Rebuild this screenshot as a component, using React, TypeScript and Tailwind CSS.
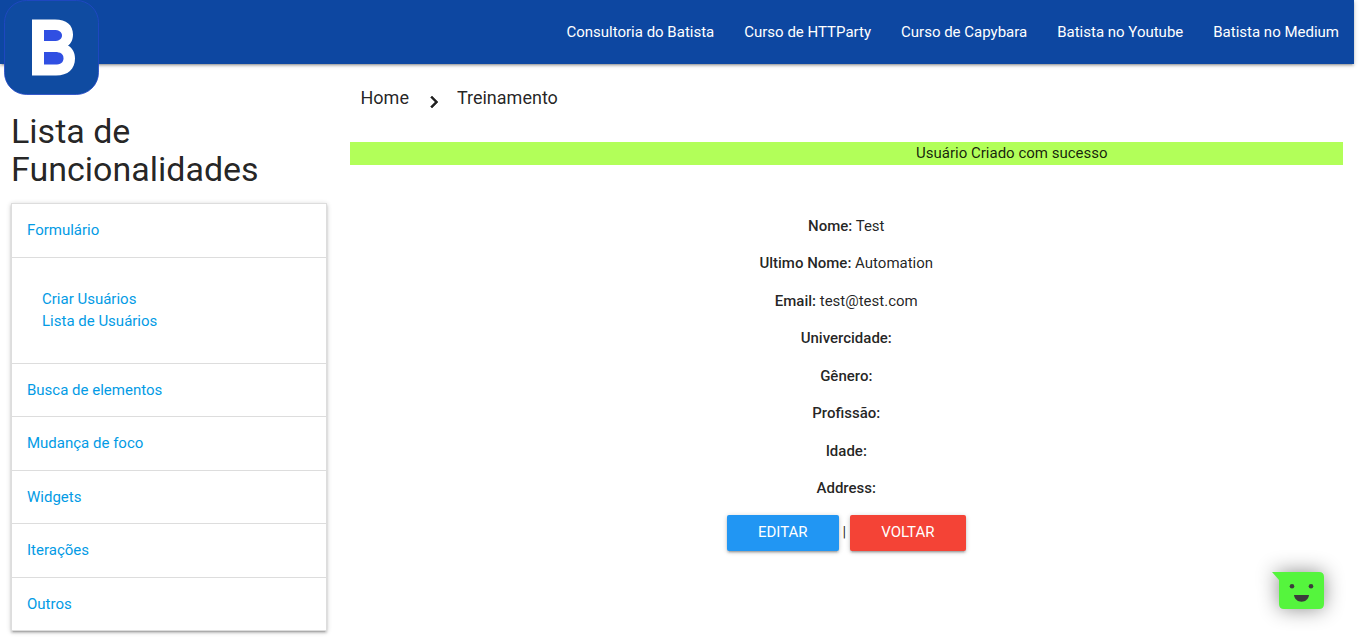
const navLinks = [
  "Consultoria do Batista",
  "Curso de HTTParty",
  "Curso de Capybara",
  "Batista no Youtube",
  "Batista no Medium",
];

const sections: { title: string; links?: string[] }[] = [
  { title: "Formulário", links: ["Criar Usuários", "Lista de Usuários"] },
  { title: "Busca de elementos" },
  { title: "Mudança de foco" },
  { title: "Widgets" },
  { title: "Iterações" },
  { title: "Outros" },
];

const fields = [
  { label: "Nome:", value: "Test" },
  { label: "Ultimo Nome:", value: "Automation" },
  { label: "Email:", value: "test@test.com" },
  { label: "Univercidade:", value: "" },
  { label: "Gênero:", value: "" },
  { label: "Profissão:", value: "" },
  { label: "Idade:", value: "" },
  { label: "Address:", value: "" },
];

const raised =
  "shadow-[0_2px_2px_0_rgba(0,0,0,0.14),0_3px_1px_-2px_rgba(0,0,0,0.12),0_1px_5px_0_rgba(0,0,0,0.2)]";

function Logo() {
  return (
    <svg viewBox="0 0 95 95" className="block size-[95px]" aria-hidden="true">
      <rect x="0.5" y="0.5" width="94" height="94" rx="22" fill="#0f4ba1" stroke="#2348c8" strokeWidth="0.8" />
      <path
        fill="#fff"
        d="M28 19.5H51C62.500 19.500 69 25 69 34.500C69 39.500 67 43.500 64 45.500C68.500 48 71 52.500 71 58.500C71 69 64 75.500 52 75.500H28Z"
      />
      <path fill="#304fe2" d="M40 30H50C55 30 58 32 58 35.500C58 39 55 41 50 41H40Z" />
      <path fill="#304fe2" d="M40 52H51C56.500 52 59.500 54 59.500 58.200C59.500 62.500 56.500 64.500 51 64.500H40Z" />
    </svg>
  );
}

function Header() {
  return (
    <header className={`flex h-16 items-start justify-between bg-[#0d47a1] pl-1 text-white ${raised}`}>
      <a href="#" aria-label="Batista" className="relative shrink-0">
        <Logo />
      </a>
      <nav className="flex h-16 items-center">
        {navLinks.map((label) => (
          <a key={label} href="#" className="px-[15px]">
            {label}
          </a>
        ))}
      </nav>
    </header>
  );
}

function Sidebar() {
  return (
    <aside className="w-1/4 pt-12 pr-3 pl-[11px]">
      <h1 className="text-[34px] leading-[38px]">Lista de Funcionalidades</h1>
      <ul className={`mt-[15px] border border-b-0 border-[#ddd] text-[#039be5] ${raised}`}>
        {sections.map((section) => (
          <li key={section.title}>
            <a href="#" className="block border-b border-[#ddd] p-[15px]">
              {section.title}
            </a>
            {section.links && (
              <div className="flex flex-col items-start border-b border-[#ddd] p-[30px]">
                {section.links.map((link) => (
                  <a key={link} href="#">
                    {link}
                  </a>
                ))}
              </div>
            )}
          </li>
        ))}
      </ul>
    </aside>
  );
}

function Breadcrumb() {
  return (
    <nav aria-label="Breadcrumb" className="flex items-center px-[11px] pt-[18px] text-lg">
      <a href="#">Home</a>
      <svg viewBox="0 0 24 24" className="mx-3 mt-2 size-6" fill="currentColor" stroke="currentColor" strokeWidth="0.5" aria-hidden="true">
        <path d="M11 6L9.590 7.410 14.170 12l-4.580 4.590L11 18l6-6z" />
      </svg>
      <a href="#">Treinamento</a>
    </nav>
  );
}

function ChatButton() {
  return (
    <button
      type="button"
      aria-label="Chat"
      className="fixed right-[42px] bottom-8 drop-shadow-[0_0_10px_rgba(0,0,0,0.45)]"
    >
      <svg viewBox="0 0 52 37" className="block h-[37px] w-[52px]" aria-hidden="true">
        <path fill="#55f53d" d="M0 0H47Q52 0 52 5V32Q52 37 47 37H12Q7 37 7 32V8Z" />
        <circle cx="20" cy="14.300" r="2.300" fill="#3b3b3b" />
        <circle cx="39" cy="14.300" r="2.300" fill="#3b3b3b" />
        <path fill="#3b3b3b" d="M22 23H37C36.500 27 33.500 29.700 29.500 29.700S22.500 27 22 23Z" />
      </svg>
    </button>
  );
}

export default function App() {
  return (
    <div className="pr-3 pb-2 font-['Roboto',sans-serif] text-[15px] leading-normal text-black/87">
      <Header />
      <div className="flex">
        <Sidebar />
        <main className="w-3/4 px-[11px]">
          <Breadcrumb />
          <p className="mt-7 bg-[#b2ff59] pl-[33.333%] text-center">Usuário Criado com sucesso</p>
          <div className="mt-[50px] flex flex-col gap-[15px] text-center">
            {fields.map((field) => (
              <p key={field.label}>
                <strong className="font-medium">{field.label}</strong> {field.value}
              </p>
            ))}
          </div>
          <div className="mt-[15px] flex items-center justify-center gap-1">
            <a href="#" className={`flex h-9 items-center rounded-xs bg-[#2196f3] px-[31px] text-white uppercase ${raised}`}>
              Editar
            </a>
            <span>|</span>
            <a href="#" className={`flex h-9 items-center rounded-xs bg-[#f44336] px-[31px] text-white uppercase ${raised}`}>
              Voltar
            </a>
          </div>
        </main>
      </div>
      <ChatButton />
    </div>
  );
}
